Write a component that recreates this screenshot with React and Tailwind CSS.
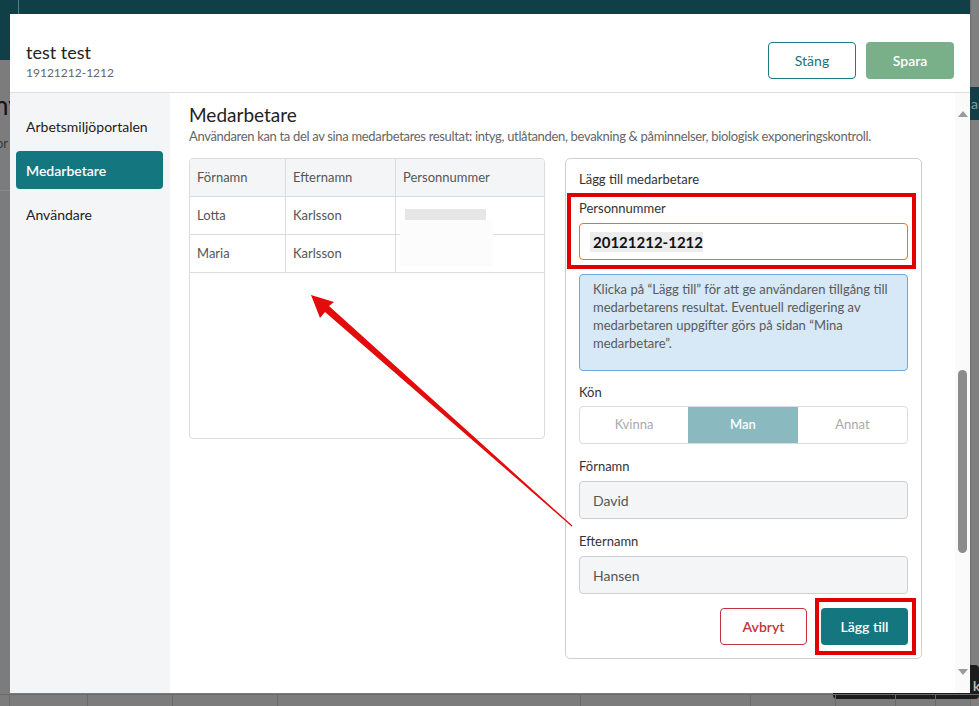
import React from 'react';

const font = { fontFamily: 'Lato, "Open Sans", sans-serif' };

const rows = [
  { first: 'Lotta', last: 'Karlsson' },
  { first: 'Maria', last: 'Karlsson' },
];

const Label = ({ children, className = '' }) => (
  <div className={`text-[13px] leading-[18px] text-[#333] ${className}`}>{children}</div>
);

const Sidebar = () => (
  <div className="w-[160px] shrink-0 bg-[#f4f5f7] pt-[14px] px-[6px] flex flex-col gap-[6px]">
    <div className="h-[38px] flex items-center px-[10px] text-[14px] text-[#222]">
      Arbetsmiljöportalen
    </div>
    <div className="h-[38px] flex items-center px-[10px] text-[14px] font-semibold text-white bg-[#14767e] rounded-[4px] mr-[1px]">
      Medarbetare
    </div>
    <div className="h-[38px] flex items-center px-[10px] text-[14px] text-[#222]">Användare</div>
  </div>
);

const CoworkerTable = () => (
  <div className="w-[356px] h-[281px] border border-[#dcdcdc] rounded-[4px] overflow-hidden text-[13px] text-[#555]">
    <div className="flex h-[38px] bg-[#f4f5f7] border-b border-[#dcdcdc]">
      <div className="w-[96px] px-[7px] flex items-center border-r border-[#dcdcdc]">Förnamn</div>
      <div className="w-[110px] px-[7px] flex items-center border-r border-[#dcdcdc]">Efternamn</div>
      <div className="flex-1 px-[7px] flex items-center">Personnummer</div>
    </div>
    {rows.map((r, i) => (
      <div key={r.first} className="flex h-[38px] border-b border-[#dcdcdc]">
        <div className="w-[96px] px-[7px] flex items-center border-r border-[#dcdcdc]">{r.first}</div>
        <div className="w-[110px] px-[7px] flex items-center border-r border-[#dcdcdc]">{r.last}</div>
        <div className="flex-1 relative">
          {i === 0 ? (
            <div className="absolute left-[9px] top-[12px] w-[81px] h-[11px] bg-[#e6e6e6]" />
          ) : (
            <div className="absolute left-[9px] top-[12px] w-[81px] h-[18px] bg-[#f0f0f0]" />
          )}
          {i === 0 && (
            <div className="absolute left-[4px] top-[23px] w-[93px] h-[46px] bg-[#fcfcfc] z-10" />
          )}
        </div>
      </div>
    ))}
  </div>
);

const Field = ({ value }) => (
  <div className="h-[38px] rounded-[4px] border border-[#cfcfcf] bg-[#f4f5f7] flex items-center px-[13px] text-[14px] text-[#555]">
    {value}
  </div>
);

const AddForm = () => (
  <div className="relative w-[357px] h-[501px] border border-[#cfcfcf] rounded-[5px] px-[13px] pt-[11px]">
    <Label className="text-[#222]">Lägg till medarbetare</Label>
    <Label className="mt-[11px]">Personnummer</Label>
    <div className="mt-[6px] h-[37px] rounded-[4px] border border-[#d97d22] flex items-center px-[10px]">
      <span className="bg-[#ececec] pl-[3px] text-[15px] font-bold text-[#111] leading-[20px]">
        20121212-1212
      </span>
    </div>
    <div className="mt-[14px] h-[97px] rounded-[4px] border border-[#6aa9e2] bg-[#d7e8f7] px-[13px] pt-[5px] text-[13px] leading-[18px] text-[#5a5a5a]">
      Klicka på “Lägg till” för att ge användaren tillgång till medarbetarens resultat. Eventuell
      redigering av medarbetaren uppgifter görs på sidan “Mina medarbetare”.
    </div>
    <Label className="mt-[12px]">Kön</Label>
    <div className="mt-[5px] h-[38px] flex rounded-[4px] border border-[#dcdcdc] overflow-hidden text-[13px]">
      <div className="w-[108px] flex items-center justify-center text-[#aaa]">Kvinna</div>
      <div className="w-[110px] flex items-center justify-center bg-[#8ab9bf] text-white font-semibold">
        Man
      </div>
      <div className="flex-1 flex items-center justify-center text-[#aaa]">Annat</div>
    </div>
    <Label className="mt-[13px]">Förnamn</Label>
    <div className="mt-[6px]">
      <Field value="David" />
    </div>
    <Label className="mt-[13px]">Efternamn</Label>
    <div className="mt-[6px]">
      <Field value="Hansen" />
    </div>
    <div className="mt-[14px] flex justify-end gap-[14px]">
      <button className="w-[87px] h-[37px] rounded-[4px] border border-[#c1343c] text-[#c1343c] text-[14px] font-semibold">
        Avbryt
      </button>
      <button className="w-[87px] h-[37px] rounded-[4px] bg-[#14767e] text-white text-[14px] font-semibold">
        Lägg till
      </button>
    </div>
    {/* annotation boxes */}
    <div className="absolute left-[1px] top-[34px] w-[349px] h-[76px] border-4 border-[#e10000] pointer-events-none" />
    <div className="absolute left-[249px] top-[439px] w-[101px] h-[57px] border-4 border-[#e10000] pointer-events-none" />
  </div>
);

const Scrollbar = () => (
  <div className="w-[15px] shrink-0 bg-[#fafafa] flex flex-col items-center justify-between py-[18px] relative">
    <svg width="10" height="6" viewBox="0 0 10 6">
      <path d="M0 6 L5 0 L10 6 Z" fill="#9a9a9a" />
    </svg>
    <div className="absolute left-[3px] top-[277px] w-[9px] h-[183px] rounded-full bg-[#8c8c8c]" />
    <svg width="10" height="6" viewBox="0 0 10 6">
      <path d="M0 0 L10 0 L5 6 Z" fill="#9a9a9a" />
    </svg>
  </div>
);

const Arrow = () => (
  <svg className="absolute inset-0 pointer-events-none" width="979" height="706" viewBox="0 0 979 706">
    <polygon
      points="311,295 334,302 329,306 572.4,525.6 571.6,526.4 325,312 320,318"
      fill="#e30b0b"
    />
  </svg>
);

export default function App() {
  return (
    <div className="relative w-[979px] h-[706px] overflow-hidden bg-[#7c7c7c]" style={font}>
      {/* page behind the dialog */}
      <div className="absolute left-0 top-0 w-[970px] h-[60px] bg-[#113f48]">
        <div className="absolute left-[18px] top-0 w-[1px] h-[14px] bg-[#5c7a80]" />
      </div>
      <div className="absolute right-0 top-0 w-[9px] h-full bg-[#808080] border-l border-[#6e6e6e]" />
      <div className="absolute right-0 top-[87px] w-[9px] h-[33px] bg-[#113f48] overflow-hidden">
        <span className="block text-[14px] text-[#8a9a9c] leading-[33px] pl-[1px] whitespace-nowrap">ar</span>
      </div>
      <div className="absolute left-0 top-[90px] w-[10px] h-[30px] overflow-hidden">
        <span className="block ml-[-6px] text-[26px] text-[#151515] leading-[30px] whitespace-nowrap">nv</span>
      </div>
      <div className="absolute left-0 top-[134px] w-[10px] h-[18px] overflow-hidden">
        <span className="block ml-[-4px] text-[13px] text-[#3a3a3a] whitespace-nowrap">or</span>
      </div>
      <div className="absolute left-0 top-[190px] w-[10px] h-[1px] bg-[#8a8a8a]" />
      <div className="absolute left-[833px] top-[665px] w-[146px] h-[34px] rounded-[4px] bg-[#1c1c1c]">
        <span className="absolute left-[140px] top-[12px] text-[13px] font-bold text-[#bbb]">k</span>
      </div>
      <div className="absolute left-0 top-[694px] w-full h-[1px] bg-[#6a6a6a]" />
      {[9, 87, 172, 277, 580, 750, 835, 895, 935].map((x) => (
        <div key={x} className="absolute top-[694px] w-[1px] h-[12px] bg-[#6a6a6a]" style={{ left: x }} />
      ))}

      {/* dialog */}
      <div className="absolute left-[10px] top-[14px] w-[960px] h-[679px] bg-white flex flex-col">
        <div className="h-[79px] shrink-0 border-b border-[#dedede] flex items-start justify-between pl-[16px] pr-[16px]">
          <div className="pt-[26px]">
            <div className="text-[18px] leading-[24px] text-[#222]">test test</div>
            <div className="text-[12px] leading-[16px] text-[#666] mt-[1px]">19121212-1212</div>
          </div>
          <div className="flex gap-[10px] pt-[28px]">
            <button className="w-[88px] h-[37px] rounded-[4px] border border-[#1c7a82] text-[#1f6f78] text-[14px]">
              Stäng
            </button>
            <button className="w-[88px] h-[37px] rounded-[4px] bg-[#79b08a] text-white text-[14px] font-semibold">
              Spara
            </button>
          </div>
        </div>
        <div className="flex flex-1 min-h-0">
          <Sidebar />
          <div className="flex-1 pl-[19px] pt-[11px]">
            <div className="text-[19px] leading-[22px] text-[#222]">Medarbetare</div>
            <div className="mt-[1px] text-[13px] leading-[18px] text-[#666] tracking-[-0.33px] whitespace-nowrap">
              Användaren kan ta del av sina medarbetares resultat: intyg, utlåtanden, bevakning &amp;
              påminnelser, biologisk exponeringskontroll.
            </div>
            <div className="mt-[13px] flex gap-[20px]">
              <CoworkerTable />
              <AddForm />
            </div>
          </div>
          <Scrollbar />
        </div>
      </div>
      <Arrow />
    </div>
  );
}
